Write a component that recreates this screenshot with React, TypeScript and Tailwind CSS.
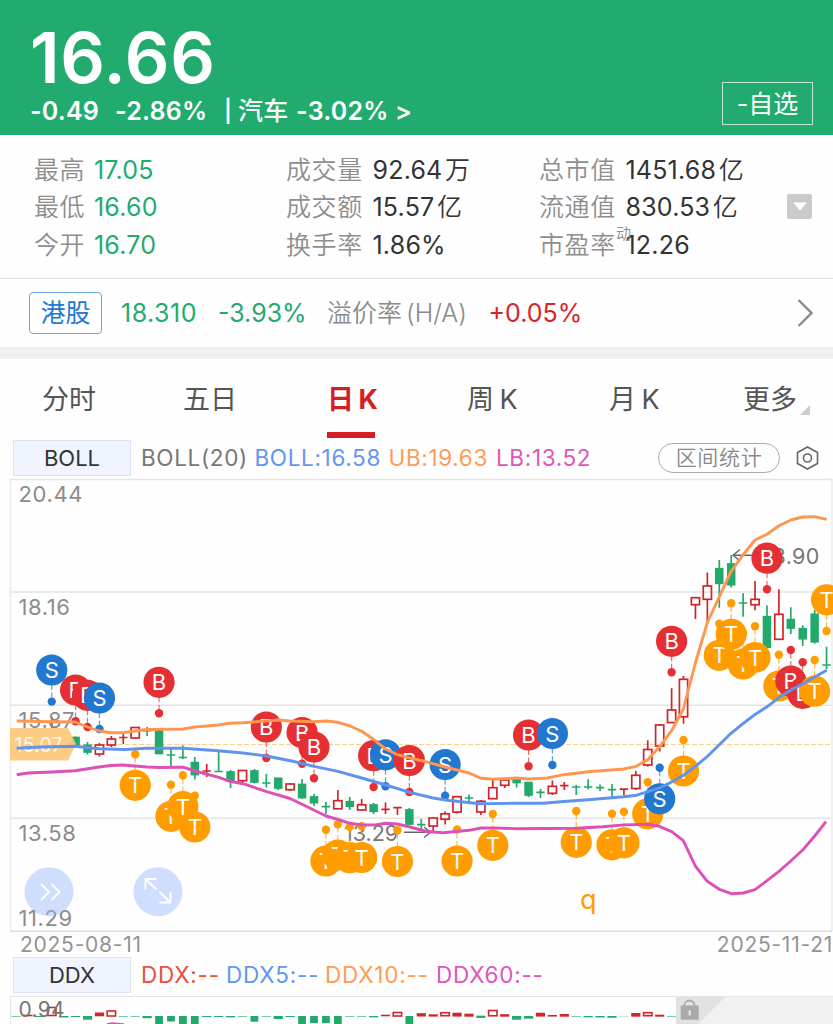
import React from "react";

type Candle = {
  up: boolean;
  top: number;
  bottom: number;
  high: number;
  low: number;
};

type Signal = { i: number; kind: "B" | "S" | "T"; y: number; dot: number };

const RED = "#d0262b";
const GREEN = "#22a96b";

const xAt = (i: number) => 16 + i * 11.92;

const stats = [
  [
    { label: "最高", value: "17.05" },
    { label: "最低", value: "16.60" },
    { label: "今开", value: "16.70" },
  ],
  [
    { label: "成交量", value: "92.64", unit: "万" },
    { label: "成交额", value: "15.57", unit: "亿" },
    { label: "换手率", value: "1.86%" },
  ],
  [
    { label: "总市值", value: "1451.68", unit: "亿" },
    { label: "流通值", value: "830.53", unit: "亿" },
    { label: "市盈率", value: "12.26", sup: "动" },
  ],
];

// [index, up, body top, body bottom, high, low]
const rawCandles: [number, number, number, number, number, number][] = [
  [3, 1, 722, 722, 717, 729],
  [5, 0, 737.5, 746, 736.5, 747],
  [6, 0, 745.3, 752, 742, 754.5],
  [7, 1, 745, 754, 743, 756.5],
  [8, 1, 739, 745, 736, 747],
  [9, 1, 737.5, 737.5, 734, 744],
  [10, 1, 727.5, 738, 727.5, 738],
  [11, 0, 730.7, 730.7, 727, 736],
  [12, 0, 731, 753.5, 730, 754],
  [13, 0, 755, 755, 749, 767.5],
  [14, 0, 757.5, 757.5, 745.5, 759],
  [15, 0, 762.6, 774.6, 757, 779.5],
  [16, 1, 771, 771, 764, 777],
  [17, 0, 771.5, 771.5, 751, 772],
  [18, 0, 772, 781, 770, 788],
  [19, 1, 770.5, 780.7, 770, 783],
  [20, 0, 771, 782, 769, 783.5],
  [21, 0, 783, 783, 774, 787.5],
  [22, 0, 778.3, 788, 778, 790],
  [23, 1, 784, 789.7, 783, 791],
  [24, 0, 784.5, 797.5, 779, 799],
  [25, 0, 797, 802.7, 794, 806],
  [26, 0, 806.7, 806.7, 802, 814],
  [27, 1, 800.7, 808.8, 790, 809],
  [28, 0, 801.7, 806.3, 797, 810],
  [29, 1, 804.8, 810, 799, 810],
  [30, 0, 805, 811.3, 803, 814],
  [31, 1, 809.3, 809.3, 802.6, 814],
  [32, 1, 807.7, 807.7, 807, 815],
  [33, 0, 810, 824, 808, 825],
  [34, 0, 824.7, 824.7, 819, 829],
  [35, 1, 818, 826, 818, 831],
  [36, 1, 813.8, 819.2, 811.5, 824.5],
  [37, 1, 796.7, 812, 796, 813.5],
  [38, 0, 798, 798, 794.6, 801.5],
  [39, 1, 801.3, 812, 800, 815],
  [40, 1, 787.7, 798.7, 778.7, 799],
  [41, 1, 780, 785.3, 779, 788],
  [42, 0, 779.3, 782.5, 779, 787.5],
  [43, 0, 782.6, 795, 782, 797],
  [44, 0, 792.3, 792.3, 789, 798],
  [45, 1, 786.3, 793.3, 780.6, 795],
  [46, 1, 785.7, 785.7, 782, 790],
  [47, 0, 787, 787, 785, 795],
  [48, 0, 787, 787, 779.3, 789.5],
  [49, 0, 787.7, 787.7, 784.6, 791],
  [50, 0, 789.7, 789.7, 784, 796.7],
  [51, 1, 789.2, 789.2, 788.5, 795.6],
  [52, 1, 775.3, 788.5, 771, 790],
  [53, 1, 749.5, 765, 740.3, 766.8],
  [54, 1, 725, 746, 724, 751.5],
  [55, 1, 710, 722.6, 688.3, 723],
  [56, 1, 679.3, 716.8, 676, 723.7],
  [57, 1, 597.7, 604.7, 597, 619],
  [58, 1, 586, 599.3, 572.6, 624],
  [59, 0, 568.7, 583.3, 560, 607.7],
  [60, 0, 564, 584.7, 555, 587.5],
  [61, 0, 603, 603, 593.3, 616.7],
  [62, 1, 599.3, 604.7, 581, 610.3],
  [63, 0, 616.7, 647.3, 605.3, 648],
  [64, 1, 614.3, 639.3, 589.3, 640],
  [65, 0, 619.7, 628, 607.3, 634],
  [66, 0, 628.7, 638.7, 625.3, 646],
  [67, 0, 614.3, 641.7, 610, 643.7],
  [68, 0, 665, 665, 646.7, 669],
];

const candles: (Candle & { i: number })[] = rawCandles.map(
  ([i, up, top, bottom, high, low]) => ({ i, up: up === 1, top, bottom, high, low }),
);

const signals: Signal[] = [
  { i: 3, kind: "S", y: 670, dot: 701.6 },
  { i: 5, kind: "B", y: 690, dot: 721.3 },
  { i: 6, kind: "B", y: 695.3, dot: 727 },
  { i: 7, kind: "S", y: 698, dot: 729 },
  { i: 10, kind: "T", y: 785.3, dot: 754.3 },
  { i: 12, kind: "B", y: 682.3, dot: 713.3 },
  { i: 13, kind: "T", y: 816.3, dot: 784.8 },
  { i: 14, kind: "T", y: 806.5, dot: 775.3 },
  { i: 15, kind: "T", y: 827, dot: 795.6 },
  { i: 21, kind: "B", y: 727, dot: 758 },
  { i: 24, kind: "B", y: 732.5, dot: 763.7 },
  { i: 25, kind: "B", y: 747, dot: 778.3 },
  { i: 26, kind: "T", y: 861, dot: 829.7 },
  { i: 27, kind: "T", y: 855, dot: 824.3 },
  { i: 28, kind: "T", y: 857.7, dot: 826.7 },
  { i: 29, kind: "T", y: 857.5, dot: 826.3 },
  { i: 30, kind: "B", y: 755.7, dot: 787 },
  { i: 31, kind: "S", y: 754.8, dot: 786.3 },
  { i: 32, kind: "T", y: 861.5, dot: 830.3 },
  { i: 33, kind: "B", y: 760.5, dot: 792 },
  { i: 36, kind: "S", y: 764.5, dot: 795.8 },
  { i: 37, kind: "T", y: 861, dot: 829.5 },
  { i: 40, kind: "T", y: 845.3, dot: 814 },
  { i: 43, kind: "B", y: 735, dot: 766.3 },
  { i: 45, kind: "S", y: 733.5, dot: 765 },
  { i: 47, kind: "T", y: 842.3, dot: 811 },
  { i: 50, kind: "T", y: 844.8, dot: 813.7 },
  { i: 51, kind: "T", y: 842.8, dot: 811.8 },
  { i: 53, kind: "T", y: 813.8, dot: 782.3 },
  { i: 54, kind: "S", y: 798.8, dot: 767.7 },
  { i: 55, kind: "B", y: 641.3, dot: 672.3 },
  { i: 56, kind: "T", y: 771, dot: 740 },
  { i: 59, kind: "T", y: 655.3, dot: 623.7 },
  { i: 61, kind: "T", y: 664, dot: 633 },
  { i: 60, kind: "T", y: 634.3, dot: 603.2 },
  { i: 62, kind: "T", y: 657.5, dot: 626.3 },
  { i: 63, kind: "B", y: 558.2, dot: 589.3 },
  { i: 64, kind: "T", y: 686, dot: 654.8 },
  { i: 65, kind: "B", y: 681, dot: 650 },
  { i: 66, kind: "B", y: 693.3, dot: 662.2 },
  { i: 67, kind: "T", y: 691.2, dot: 660 },
  { i: 68, kind: "T", y: 599.8, dot: 631 },
];

const signalColor = { B: "#e53033", S: "#2277d0", T: "#ff9d00" };

const upper =
  "16.7,721 52,721.7 75,722 87.5,727 99.4,731 111,732.8 123,732.6 135,731 147,729.5 183,729 195,727 218,725 230,723.3 243,722.7 266.6,721 278,720 290,721 313,721.7 326,721 338,722.3 350,726 361.7,731.3 373.5,739.3 385.5,749 397.5,754.7 410,758 426.6,761.9 445,767 457,770 469,773 481,778.3 492.7,779.3 516.7,778 528.7,779 545,778.3 564,774.7 588,771.7 624,769 636,766.3 647.7,759.7 659.7,746.5 671.6,730.7 683.4,709 688,691 695.4,663 707.2,623 719.3,596.7 731,571.7 743,555 755,540 767,534.3 779,525.7 790.7,520 802.7,517 814.7,516.7 826.7,519.3";
const middle =
  "16.7,748.2 40,747 75,746.2 99,748.7 125,749.5 147,748.2 183,748.2 218,750.7 243,753 266.7,756 291.7,761 314,766.3 338,771.3 361.7,778 385.7,785 410,792.3 433,798 449,800.5 480,803.7 513,803.3 543,803.3 564,801.5 588,799.7 624,796.7 636.7,795.2 659.7,787.9 671.7,782 683.4,775.3 695.3,766.3 707.3,756.5 731,733.3 743,723.7 755,714.5 767,706.8 779,697.5 790.7,690.3 802.7,683.7 814.6,677 826.7,670.3";
const lower =
  "16.7,774.7 28,773 52,772 75,770.7 99,767 111,765.5 123,765 147,767 159,767.5 183,767.2 195,771 218.7,777.3 230,781.3 243,783.7 266.7,791.7 290,798.5 302,804.3 326,816 338,819.5 350,823.3 361.7,825 376.7,824.7 385.7,823.3 397.3,824 410,827 426.7,831.5 443,832.7 469,830.3 481,828 492,827.9 516.7,828.7 576.7,828.3 603,826.7 624,824.9 647.7,824.3 659.3,826.3 671.7,831.7 683.3,840.7 695.3,866 707.3,881.3 719.3,889.3 731.3,893.7 743.3,893 755,889.7 767,880.7 779,871.3 790.7,861 802.7,850 814.7,836 826,821.7";

// [index, kind, y, height]; h is a hollow red bar
const ddxBars: [number, "r" | "g" | "h" | "f", number, number][] = [
  [0, "f", 1016, 1],
  [1, "r", 1014.7, 1.6],
  [2, "g", 1016, 1],
  [3, "h", 1007.5, 8],
  [4, "g", 1016, 1.5],
  [5, "g", 1016, 1],
  [6, "g", 1016, 3.7],
  [7, "r", 1012.5, 3.8],
  [8, "h", 1011, 5],
  [9, "f", 1016, 1],
  [10, "f", 1016, 1],
  [11, "g", 1016, 2.2],
  [12, "g", 1016, 8],
  [13, "g", 1016, 5.5],
  [14, "g", 1016, 8],
  [15, "g", 1016, 8],
  [16, "g", 1016, 1],
  [17, "g", 1016, 1],
  [18, "g", 1016, 1.3],
  [19, "f", 1016, 1],
  [20, "g", 1016, 5.7],
  [21, "f", 1016, 1],
  [22, "g", 1016, 3],
  [23, "g", 1016, 1],
  [24, "g", 1016, 8],
  [25, "g", 1016, 7],
  [26, "g", 1016, 7],
  [27, "g", 1016, 8],
  [28, "f", 1016, 1],
  [29, "f", 1016, 1],
  [30, "g", 1016, 1.3],
  [31, "r", 1014.7, 1.6],
  [32, "h", 1012.5, 3.5],
  [33, "g", 1016, 8],
  [34, "r", 1013.2, 3.3],
  [35, "r", 1014.3, 2.3],
  [36, "h", 1012.7, 3],
  [37, "r", 1012.7, 3.9],
  [38, "r", 1013.7, 3],
  [39, "g", 1015.7, 2.2],
  [40, "h", 1010.5, 5.3],
  [41, "r", 1014.2, 2.5],
  [42, "g", 1016, 3.7],
  [43, "g", 1016, 2.7],
  [44, "r", 1012.7, 3.9],
  [45, "r", 1015, 1.6],
  [46, "r", 1014, 2.7],
  [47, "f", 1016, 1],
  [48, "g", 1016, 1.3],
  [49, "g", 1016, 1.4],
  [50, "g", 1016, 1.7],
  [51, "f", 1016, 0.4],
  [52, "r", 1013, 3.7],
  [53, "h", 1012.7, 3],
  [54, "r", 1014.7, 2],
  [55, "f", 1016, 1],
];

const Header = () => (
  <header className="flex h-[135px] justify-between bg-[#22ab6e] pl-[30px] pr-5 text-white">
    <div>
      <div className="mt-5 h-[76px] text-[70px] leading-[76px] font-semibold tracking-[0.7px]">
        16.66
      </div>
      <div className="flex h-[29px] items-center text-[25px] leading-7 font-semibold tracking-[0.2px] whitespace-pre">
        <span className="w-[85px]">-0.49</span>
        <span className="w-[109px]">-2.86%</span>
        <span className="w-[14px] text-[22px]">|</span>
        <span className="w-[58px] font-medium">汽车</span>
        <span>-3.02% &gt;</span>
      </div>
    </div>
    <button className="mt-[82px] h-[43px] w-[91px] border border-white/70 pt-px text-[25px] leading-[41px]">
      -自选
    </button>
  </header>
);

const Stats = () => (
  <section className="flex h-[144px] items-start border-b border-[#e6e6e6] pt-[17px] pl-[34px] text-[25px] tracking-[0.2px]">
    {stats.map((col, c) => (
      <div
        key={c}
        className={c === 0 ? "w-[252px]" : c === 1 ? "w-[253px]" : "w-[248px]"}
      >
        {col.map((s) => (
          <div key={s.label} className="flex h-[37.3px] items-center">
            <span
              className={`relative font-[350] tracking-[0.6px] text-[#8e8e8e] ${
                c === 0 ? "w-[60px]" : "w-[86.5px]"
              }`}
            >
              {s.label}
              {"sup" in s && (
                <span className="absolute top-[-1px] left-[77px] text-[15px] leading-none">
                  {s.sup}
                </span>
              )}
            </span>
            <span className={c === 0 ? "text-[#22ab6e]" : "text-[#333]"}>
              {s.value}
            </span>
            {"unit" in s && (
              <span className="ml-[2.5px] font-[350] text-[#333]">{s.unit}</span>
            )}
          </div>
        ))}
      </div>
    ))}
    <button className="mt-[42px] flex size-[25px] items-center justify-center rounded-[2px] bg-[#cacaca]">
      <svg className="h-[9px] w-[14px]" viewBox="0 0 14 9" fill="#fff">
        <path d="M0 0.5h14L7 8.5z" />
      </svg>
    </button>
  </section>
);

const HkRow = () => (
  <section className="flex h-[68px] items-center pr-5 pl-[29px] text-[25px]">
    <span className="h-[42px] w-[73px] rounded-[4px] border-[1.5px] border-[#6aa5e6] text-center leading-[40px] text-[#2277d0]">
      港股
    </span>
    <span className="ml-[19px] w-[97px] pt-px tracking-[0.5px] text-[#22ab6e]">18.310</span>
    <span className="w-[109px] pt-px text-[#22ab6e]">-3.93%</span>
    <span className="w-[161.500px] pt-px font-[350] text-[#8a8a8a] [word-spacing:-3px]">
      溢价率 (H/A)
    </span>
    <span className="pt-px text-[#d8232a]">+0.05%</span>
    <svg
      className="ml-auto h-7 w-4"
      viewBox="0 0 16 28"
      fill="none"
      stroke="#8a8a8a"
      strokeWidth="2.4"
    >
      <path d="M1.5 1L14.5 14L1.5 27" />
    </svg>
  </section>
);

const Tabs = () => (
  <nav className="flex h-[79px] pl-[42px] text-[27px] leading-[81px] text-[#555] [word-spacing:-2px]">
    <span className="w-[141px]">分时</span>
    <span className="w-[144px]">五日</span>
    <span className="w-[140px] font-bold text-[#d31f24]">
      <span className="inline-block h-[79px] w-[48px] border-b-6 border-[#d31f24] whitespace-nowrap">
        日 K
      </span>
    </span>
    <span className="w-[142px]">周 K</span>
    <span className="w-[134px]">月 K</span>
    <span className="flex">
      更多
      <svg className="mt-[46px] ml-[3px] size-[10px]" viewBox="0 0 10 10" fill="#ccc">
        <path d="M10 0v10H0z" />
      </svg>
    </span>
  </nav>
);

const Selector = ({ name }: { name: string }) => (
  <span className="mr-[10px] h-[36px] w-[118px] border border-[#d9e4fb] bg-[#eff4ff] text-center text-[22px] leading-[34px] tracking-normal text-[#333]">
    {name}
  </span>
);

const IndicatorRow = () => (
  <div className="mt-[2px] flex h-[36px] items-center pl-[13px] text-[22.5px] tracking-[0.65px]">
    <Selector name="BOLL" />
    <span className="w-[113.500px] text-[#777]">BOLL(20)</span>
    <span className="w-[134px] text-[#6495f0]">BOLL:16.58</span>
    <span className="w-[107.500px] text-[#ff9c55]">UB:19.63</span>
    <span className="w-[162px] text-[#e055bb]">LB:13.52</span>
    <span className="h-[30px] w-[122px] rounded-full border-[1.5px] border-[#aaa] text-center text-[21px] leading-[27px] font-[350] text-[#888]">
      区间统计
    </span>
    <svg
      className="ml-[16px] h-6 w-[23px]"
      viewBox="0 0 23 24"
      fill="none"
      stroke="#666"
      strokeWidth="1.6"
    >
      <path d="M11.5 1L21.5 6.5V17.5L11.5 23L1.5 17.5V6.5Z" />
      <circle cx="11.5" cy="12" r="4" />
    </svg>
  </div>
);

const CandleShape = ({ i, up, top, bottom, high, low }: Candle & { i: number }) => {
  const x = xAt(i);
  const color = up ? RED : GREEN;
  if (top === bottom) {
    return (
      <path
        d={`M${x} ${high}V${low}M${x - 4.2} ${top}h8.4`}
        stroke={color}
        strokeWidth="1.7"
      />
    );
  }
  return (
    <g stroke={color} strokeWidth="1.7">
      <path d={`M${x} ${high}V${top}M${x} ${bottom}V${low}`} />
      <rect
        x={x - (up ? 4.1 : 3.4)}
        y={top}
        width={up ? 8.2 : 6.8}
        height={bottom - top}
        fill={up ? "none" : color}
      />
    </g>
  );
};

const SignalShape = ({ i, kind, y, dot }: Signal) => {
  const x = xAt(i);
  const color = signalColor[kind];
  return (
    <g fill={color}>
      <path
        d={`M${x} ${y}V${dot}`}
        stroke={color}
        strokeWidth="1.2"
        strokeDasharray="5 2.5"
        opacity="0.7"
      />
      <circle cx={x} cy={dot} r="4.2" />
      <circle cx={x} cy={y} r="15.6" />
      <text x={x} y={y + 8} fontSize="22" fill="#fff" textAnchor="middle">
        {kind}
      </text>
    </g>
  );
};

const MainChart = () => (
  <svg
    className="mt-[2px] block h-[455px] w-[833px]"
    viewBox="0 478 833 455"
    fontFamily="Inter, 'Liberation Sans', sans-serif"
  >
    <g fill="none" stroke="#e4e4e4" strokeWidth="1.5">
      <path d="M10.5 479.5H832M10.5 592H832M10.5 705.2H832M10.5 818.3H832" />
      <path d="M10.5 479V931M832 479V931" stroke="#ececec" />
      <path d="M10.5 931.3H832" stroke="#dcdcdc" />
    </g>
    <path d="M76 744.5H832" stroke="#ffcf8f" strokeWidth="1.2" strokeDasharray="5 2" />

    {candles.map((c) => (
      <CandleShape key={c.i} {...c} />
    ))}

    <g fontSize="22" fill="#8c8c8c" letterSpacing="0.6">
      <text x="18.5" y="502">20.44</text>
      <text x="18.5" y="614.5">18.16</text>
      <text x="18.5" y="727.5">15.87</text>
      <text x="18.5" y="841">13.58</text>
    </g>
    <path d="M10 728H68L76 744L68 760.5H10Z" fill="#ffc87c" fillOpacity="0.93" />
    <text x="14.5" y="752" fontSize="19.5" fill="#fff" fillOpacity="0.9" letterSpacing="0.2">
      15.07
    </text>

    <g fontSize="21.5" fill="#777">
      <text x="344" y="840.5">13.29</text>
      <text x="763.5" y="563.5" letterSpacing="0.3">18.90</text>
    </g>
    <g fill="none" stroke="#666" strokeWidth="1.4">
      <path d="M404 832.3H430M424 827L430.5 832.3L424 837.5" />
      <path d="M754 555.3H733M740 549.5L733 555.3L740 561" />
    </g>

    {signals.map((s) => (
      <SignalShape key={s.i} {...s} />
    ))}

    <g fill="none" strokeWidth="2.9" strokeLinejoin="round">
      <polyline points={upper} stroke="#ff9650" />
      <polyline points={middle} stroke="#5f93ee" />
      <polyline points={lower} stroke="#dd50b8" />
    </g>
    <text x="580" y="909" fontSize="27" fill="#ff9d00">
      q
    </text>

    <text x="18.5" y="925.5" fontSize="22" fill="#8c8c8c" letterSpacing="0.6">
      11.29
    </text>
    <g fill="#9ab8ff" fillOpacity="0.45">
      <circle cx="49" cy="891.7" r="24.5" />
      <circle cx="158" cy="891.7" r="24.5" />
    </g>
    <g fill="none" stroke="#fff" strokeWidth="1.8">
      <path d="M41 884L49 892L41 900M51.5 884L59.5 892L51.5 900" />
      <path d="M145.5 889.5V879H156.5M146 879.5L156.5 889.5M170.5 892V902.5H159.5M170 902L159.5 892" />
    </g>
  </svg>
);

const DdxChart = () => (
  <svg
    className="mt-[2px] block h-[29px] w-[833px]"
    viewBox="0 995 833 29"
    fontFamily="Inter, 'Liberation Sans', sans-serif"
  >
    <path d="M10.5 1024V996.5H833" fill="none" stroke="#e6e6e6" strokeWidth="1.2" />
    {ddxBars.map(([i, kind, y, h]) =>
      kind === "h" ? (
        <rect
          key={i}
          x={xAt(i) - 4.2}
          y={y}
          width="8.4"
          height={h}
          fill="none"
          stroke={RED}
          strokeWidth="1.6"
        />
      ) : (
        <rect
          key={i}
          x={xAt(i) - (h > 5 ? 3.9 : 4.6)}
          y={y}
          width={h > 5 ? 7.8 : 9.2}
          height={h}
          fill={kind === "r" ? RED : GREEN}
          opacity={kind === "f" ? 0.6 : 1}
        />
      ),
    )}
    <text x="18.5" y="1017" fontSize="21" fill="#777" letterSpacing="0.3">
      0.94
    </text>
    <path d="M107 1024.3L112 1023.3L124 1024.3" fill="none" stroke="#dd50b8" strokeWidth="2" />
    <path d="M676 997H833V1024H676Z" fill="#f1f1f1" />
    <path d="M676 997H725L698 1024H676Z" fill="#e2e2e2" />
    <path d="M684.5 1006V1005a5 4.5 0 0 1 10 0V1006" fill="none" stroke="#aaa" strokeWidth="1.8" />
    <rect x="680.7" y="1005.5" width="18" height="14.3" rx="0.8" fill="#aaa" />
    <path d="M689.7 1010.5V1015.5" stroke="#eee" strokeWidth="2" />
  </svg>
);

const App = () => {
  return (
    <main className="h-[1024px] w-[833px] overflow-hidden bg-[#fefefe] font-['Inter','Noto_Sans_CJK_SC',sans-serif]">
      <Header />
      <Stats />
      <HkRow />
      <div className="h-3 bg-[#f0f0f0]" />
      <Tabs />
      <IndicatorRow />
      <MainChart />
      <div className="flex h-6 items-center justify-between pl-[20px] text-[21px] tracking-[0.75px] text-[#949494]">
        <span>2025-08-11</span>
        <span>2025-11-21</span>
      </div>
      <div className="flex h-[36px] items-center pl-[13px] text-[22.5px] tracking-[0.75px]">
        <Selector name="DDX" />
        <span className="w-[85px] text-[#e94f3d]">DDX:--</span>
        <span className="w-[99px] text-[#6495f0]">DDX5:--</span>
        <span className="w-[111px] text-[#ff9c55]">DDX10:--</span>
        <span className="text-[#e055bb]">DDX60:--</span>
      </div>
      <DdxChart />
    </main>
  );
};

export default App;
